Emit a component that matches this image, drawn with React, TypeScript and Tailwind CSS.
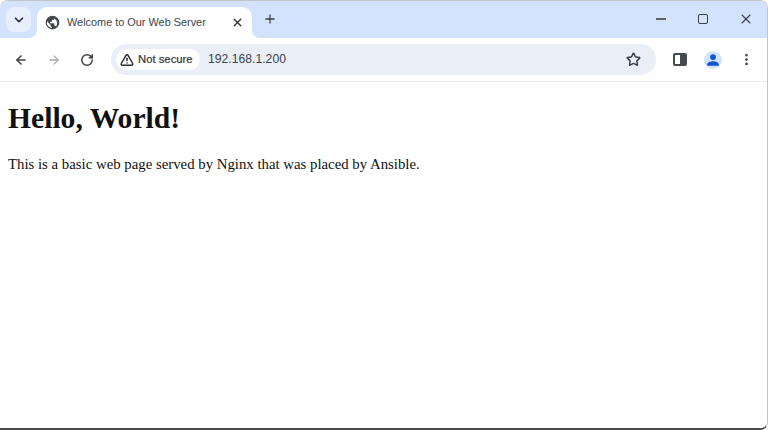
import React from "react";
import { ArrowLeft, ArrowRight, ChevronDown, MoreVertical, Plus, RotateCw, Star, TriangleAlert, X } from "lucide-react";

const GlobeIcon = () => (
  <svg width="15" height="15" viewBox="0 0 24 24" className="shrink-0">
    <path
      fill="#45494e"
      d="M12 1a11 11 0 1 0 0 22 11 11 0 0 0 0-22Zm-1 19.9A9 9 0 0 1 3.2 10L9 15.8V17c0 1.1.9 2 2 2v1.9Zm6.9-2.5A2 2 0 0 0 16 17h-1v-3c0-.6-.4-1-1-1H8v-2h2c.6 0 1-.4 1-1V8h2c1.1 0 2-.9 2-2v-.4a9 9 0 0 1 2.9 12.8Z"
    />
  </svg>
);

const ProfileIcon = () => (
  <div className="flex h-[18px] w-[18px] items-center justify-center rounded-full bg-[#d3e3fd]">
    <svg width="14" height="14" viewBox="0 0 24 24">
      <path fill="#0b57d0" d="M12 12a5 5 0 1 0 0-10 5 5 0 0 0 0 10Zm0 2c-4 0-10 2-10 5.5V22h20v-2.5C22 16 16 14 12 14Z" />
    </svg>
  </div>
);

const TitleBar = () => (
  <div className="flex h-[37px] shrink-0 bg-[#d3e3fd]">
    <div className="flex items-start pl-[6px] pt-[6px]">
      <div className="flex h-[25px] w-[25px] items-center justify-center rounded-[8px] bg-[#e8effc]">
        <ChevronDown size={14} strokeWidth={3} color="#2b2f36" />
      </div>
    </div>
    <div className="relative ml-[6px] mt-[6px] flex h-[31px] w-[215px] items-center rounded-t-[10px] bg-white pl-[8px] pr-[8px]">
      <div className="absolute -left-[8px] bottom-0 h-[8px] w-[8px] bg-white">
        <div className="h-full w-full rounded-br-[8px] bg-[#d3e3fd]" />
      </div>
      <GlobeIcon />
      <span className="ml-[7px] flex-1 truncate text-[10.9px] text-[#41454b]">Welcome to Our Web Server</span>
      <X size={13} strokeWidth={2.6} color="#2f3237" />
      <div className="absolute -right-[8px] bottom-0 h-[8px] w-[8px] bg-white">
        <div className="h-full w-full rounded-bl-[8px] bg-[#d3e3fd]" />
      </div>
    </div>
    <div className="ml-[11px] mt-[11px] h-[16px]">
      <Plus size={14} strokeWidth={2.2} color="#3c4043" />
    </div>
    <div className="ml-auto flex items-start">
      <div className="flex h-[37px] w-[43px] items-center justify-center pb-[1px]">
        <div className="h-[1.5px] w-[10px] bg-[#5f6368]" />
      </div>
      <div className="flex h-[37px] w-[42px] items-center justify-center pb-[1px]">
        <div className="h-[10px] w-[10px] rounded-[2px] border-[1.5px] border-[#3c4043]" />
      </div>
      <div className="flex h-[37px] w-[43px] items-center justify-center pb-[1px]">
        <X size={16} strokeWidth={1.6} color="#3c4043" />
      </div>
    </div>
  </div>
);

const Toolbar = () => (
  <div className="flex h-[44px] shrink-0 items-center rounded-t-[8px] border-b border-[#e9e9ea] bg-white">
    <div className="flex w-[111px] items-center pl-[14px]">
      <ArrowLeft size={14} strokeWidth={2.6} color="#3f4247" />
      <ArrowRight size={14} strokeWidth={2.2} color="#a8abaf" className="ml-[19px]" />
      <RotateCw size={14} strokeWidth={2.6} color="#3f4247" className="ml-[19px]" />
    </div>
    <div className="flex h-[31px] w-[545px] items-center rounded-full bg-[#e9eef7] pl-[5px] pr-[15px]">
      <div className="flex h-[21px] w-[84px] items-center rounded-full bg-white pl-[4px]">
        <TriangleAlert size={14} strokeWidth={2.5} color="#2a2d31" />
        <span className="ml-[4px] text-[11.3px] font-medium text-[#33363b] [-webkit-text-stroke:0.2px_#33363b]">Not secure</span>
      </div>
      <span className="ml-[8px] flex-1 text-[12.2px] text-[#3d4149]">192.168.1.200</span>
      <Star size={15} strokeWidth={2.4} color="#3c4043" />
    </div>
    <div className="ml-[17px] flex h-[13px] w-[14px] overflow-hidden rounded-[2px] border-2 border-[#45484d]">
      <div className="flex-1 bg-white" />
      <div className="w-[5px] bg-[#45484d]" />
    </div>
    <div className="ml-[17px]">
      <ProfileIcon />
    </div>
    <MoreVertical size={15} strokeWidth={2.4} color="#45484d" className="ml-[17px]" />
  </div>
);

export default function App() {
  return (
    <div className="flex h-[430px] w-[768px] flex-col overflow-hidden rounded-t-[8px] rounded-br-[8px] border-t border-r border-b-2 border-[#c4c4c4] border-b-[#4a4a4a] bg-white font-['Liberation_Sans',sans-serif]">
      <TitleBar />
      <Toolbar />
      <div className="flex-1 bg-white px-[8px] pt-[19px] font-['Liberation_Serif',serif] text-[#111111]">
        <h1 className="text-[29.6px] leading-[34px] font-bold">Hello, World!</h1>
        <p className="mt-[21px] text-[14.8px] leading-[17px]">This is a basic web page served by Nginx that was placed by Ansible.</p>
      </div>
    </div>
  );
}
